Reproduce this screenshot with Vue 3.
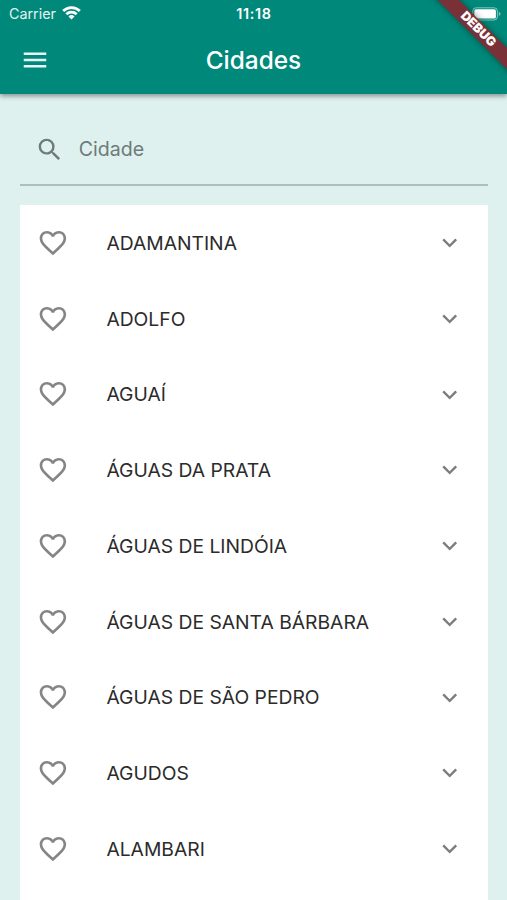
<script setup>
const cities = [
  'ADAMANTINA',
  'ADOLFO',
  'AGUAÍ',
  'ÁGUAS DA PRATA',
  'ÁGUAS DE LINDÓIA',
  'ÁGUAS DE SANTA BÁRBARA',
  'ÁGUAS DE SÃO PEDRO',
  'AGUDOS',
  'ALAMBARI',
]
</script>

<template>
  <div class="screen">
    <header class="top">
      <div class="status">
        <div class="carrier">
          <span>Carrier</span>
          <svg class="wifi" viewBox="0 0 18 14">
            <path d="M0.2 4.6a12.6 12.6 0 0 1 17.6 0l-1.8 1.9a10 10 0 0 0-14 0z" />
            <path d="M3.2 7.7a8.3 8.3 0 0 1 11.6 0l-1.8 1.9a5.8 5.8 0 0 0-8 0z" />
            <path d="M6.1 10.7a4.2 4.2 0 0 1 5.8 0L9 13.7z" />
          </svg>
        </div>
        <span class="clock">11:18</span>
        <div class="power">
          <svg class="battery" viewBox="0 0 29 14">
            <rect x="0.8" y="0.8" width="24.6" height="12.2" rx="3.2" fill="none" stroke="#fff" stroke-opacity="0.5" />
            <rect x="2.3" y="2.3" width="21.6" height="9.2" rx="1.6" fill="#fff" />
            <path d="M26.8 4.8c2.2.8 2.2 3.4 0 4.2z" fill="#fff" fill-opacity="0.5" />
          </svg>
        </div>
      </div>
      <div class="bar">
        <svg class="menu" viewBox="0 0 24 24"><path d="M3 18h18v-2H3v2zm0-5h18v-2H3v2zm0-7v2h18V6H3z" /></svg>
        <h1>Cidades</h1>
      </div>
      <div class="banner"><span>DEBUG</span></div>
    </header>
    <main>
      <div class="search">
        <svg class="lens" viewBox="0 0 24 24"><path d="M15.5 14h-.79l-.28-.27A6.47 6.47 0 0 0 16 9.5 6.5 6.5 0 1 0 9.5 16c1.61 0 3.09-.59 4.23-1.57l.27.28v.79l5 4.99L20.49 19l-4.99-5zm-6 0C7.01 14 5 11.99 5 9.5S7.01 5 9.5 5 14 7.01 14 9.5 11.99 14 9.5 14z" /></svg>
        <span>Cidade</span>
      </div>
      <ul>
        <li v-for="city in cities" :key="city">
          <svg class="heart" viewBox="0 0 24 24"><path d="M16.5 3c-1.74 0-3.41.81-4.5 2.09C10.91 3.81 9.24 3 7.5 3 4.42 3 2 5.42 2 8.5c0 3.78 3.4 6.86 8.55 11.54L12 21.35l1.45-1.32C18.6 15.36 22 12.28 22 8.5 22 5.42 19.58 3 16.5 3zm-4.4 15.55l-.1.1-.1-.1C7.14 14.24 4 11.39 4 8.5 4 6.5 5.5 5 7.5 5c1.54 0 3.04.99 3.57 2.36h1.87C13.46 5.99 14.96 5 16.5 5c2 0 3.5 1.5 3.5 3.5 0 2.89-3.14 5.74-7.9 10.05z" /></svg>
          <span class="name">{{ city }}</span>
          <svg class="chevron" viewBox="0 0 24 24"><path d="M16.59 8.59L12 13.17 7.41 8.59 6 10l6 6 6-6z" /></svg>
        </li>
      </ul>
    </main>
  </div>
</template>

<style>
body {
  margin: 0;
  background: #dff1ef;
}
</style>

<style scoped>
.screen {
  display: flex;
  flex-direction: column;
  height: 900px;
  overflow: hidden;
  background: #dff1ef;
  font-family: Inter, "Liberation Sans", sans-serif;
}
.top {
  position: relative;
  flex: none;
  height: 94px;
  clip-path: inset(0 0 -12px 0);
  background: #00897b;
  box-shadow: 0 2px 5px rgba(0, 0, 0, 0.42);
  color: #fff;
}
.status {
  display: grid;
  grid-template-columns: 1fr auto 1fr;
  align-items: center;
  height: 27px;
  padding: 0 6px 0 9px;
}
.carrier {
  display: flex;
  align-items: center;
  gap: 6px;
  font-size: 14.3px;
  color: #e3f3f1;
}
.wifi {
  width: 19px;
  height: 15px;
  margin-top: -2px;
  fill: #fff;
}
.clock {
  margin-right: 2px;
  font-size: 14.4px;
  font-weight: 600;
  letter-spacing: 0.65px;
}
.power {
  display: flex;
  justify-content: flex-end;
}
.battery {
  width: 29px;
  height: 14px;
}
.bar {
  display: grid;
  grid-template-columns: 30px 1fr 30px;
  align-items: center;
  height: 66px;
  padding: 0 20px;
}
.menu {
  width: 30px;
  height: 30px;
  fill: #e8fbf8;
}
h1 {
  margin: 0;
  text-align: center;
  font-size: 24.4px;
  font-weight: 500;
  line-height: 30px;
}
.banner {
  position: absolute;
  top: 21.8px;
  left: 417.9px;
  width: 120px;
  height: 14.7px;
  display: flex;
  align-items: center;
  justify-content: center;
  transform: rotate(45deg);
  background: #7a3037;
  box-shadow: 0 0 7px rgba(0, 0, 0, 0.45);
  font-size: 12.6px;
  font-weight: 900;
  line-height: 14px;
}
main {
  flex: 1;
  display: flex;
  flex-direction: column;
  min-height: 0;
  padding: 20px 19px 0 20px;
}
.search {
  flex: none;
  display: flex;
  align-items: center;
  gap: 14px;
  box-sizing: border-box;
  height: 72px;
  padding: 0 0 0 15.3px;
  border-bottom: 2px solid #abc0bc;
  font-size: 19.6px;
  color: #6d7b79;
}
.lens {
  width: 29.4px;
  height: 29.4px;
  margin-top: 1px;
  fill: #6d7b79;
}
ul {
  flex: 1;
  min-height: 0;
  margin: 19px 0 0;
  padding: 0;
  list-style: none;
  background: #fff;
}
li {
  display: flex;
  align-items: center;
  box-sizing: border-box;
  height: 75.75px;
  padding: 0 24px 0 17px;
}
.heart {
  width: 31.8px;
  height: 31.8px;
  fill: #858585;
}
.name {
  flex: 1;
  margin-left: 37.6px;
  font-size: 19.3px;
  color: #2b2b2b;
}
.chevron {
  width: 29.4px;
  height: 29.4px;
  fill: #7d7d7d;
}
</style>
